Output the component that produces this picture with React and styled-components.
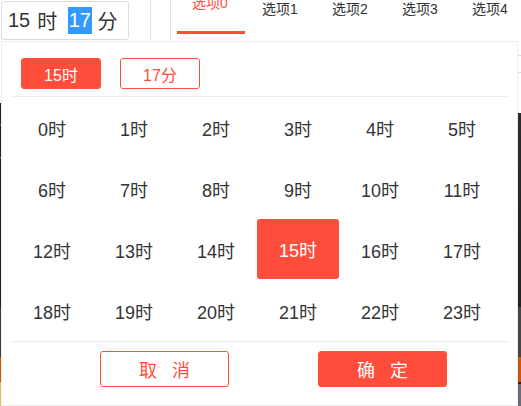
import React, { useState } from "react";
import styled, { createGlobalStyle } from "styled-components";

const RED = "#ff4d3c";

const GlobalStyle = createGlobalStyle`
  html, body {
    margin: 0;
    padding: 0;
    background: #fff;
  }
  body {
    font-family: "Liberation Sans", "Noto Sans CJK SC", sans-serif;
    color: #333;
  }
`;

const Page = styled.div`
  position: relative;
  width: 521px;
  height: 406px;
  overflow: hidden;
`;

const TopBar = styled.div`
  display: flex;
  align-items: flex-start;
  height: 41px;
`;

const TimeInput = styled.div`
  box-sizing: border-box;
  flex: none;
  margin: 1px 0 0 1px;
  width: 128px;
  height: 39px;
  border: 1px solid #dcdcdc;
  border-radius: 3px;
  display: flex;
  align-items: center;
  padding-left: 6px;
  font-size: 20px;
  color: #333;
`;

const Num = styled.span`
  line-height: 27px;
  padding: 0 ${(p) => (p.$selected ? "0.5px" : "0")};
  background: ${(p) => (p.$selected ? "#3399ff" : "transparent")};
  color: ${(p) => (p.$selected ? "#fff" : "#333")};
`;

const Unit = styled.span`
  margin: 0 ${(p) => p.$right}px 0 ${(p) => p.$left}px;
  font-family: "Noto Sans CJK SC", sans-serif;
  line-height: 27px;
`;

const Separator = styled.div`
  flex: none;
  width: 1px;
  height: 40px;
  background: #dbe2ea;
  margin-left: ${(p) => p.$gap}px;
`;

const Tabs = styled.div`
  display: flex;
  margin-left: 4px;
`;

const Tab = styled.div`
  position: relative;
  flex: none;
  width: 70px;
  height: 40px;
  font-size: 14px;
  line-height: 16px;
  text-align: center;
  color: ${(p) => (p.$active ? RED : "#333")};
  padding-top: ${(p) => (p.$active ? "0" : "1px")};
  box-sizing: border-box;

  span {
    display: inline-block;
    transform: translateY(${(p) => (p.$active ? "-5px" : "0")});
  }

  &::after {
    content: "";
    display: ${(p) => (p.$active ? "block" : "none")};
    position: absolute;
    left: 2px;
    right: 0;
    top: 31px;
    height: 3px;
    background: ${RED};
  }
`;

const Backdrop = styled.div`
  display: flex;
  justify-content: space-between;
  height: 365px;
`;

const EdgeStrip = styled.div`
  width: ${(p) => p.$w}px;
  height: 100%;
  background: ${(p) => p.$bg};
`;

const Popup = styled.div`
  position: absolute;
  top: 41px;
  left: 1px;
  width: 517px;
  height: 365px;
  box-sizing: border-box;
  border: 1px solid #eee;
  background: #fff;
`;

const PopupHead = styled.div`
  display: flex;
  gap: 19px;
  padding: 16px 0 0 19px;
  height: 31px;
  margin-bottom: 7px;
`;

const HeadButton = styled.button`
  box-sizing: border-box;
  width: 80px;
  height: 31px;
  border-radius: 3px;
  border: 1px solid ${RED};
  background: ${(p) => (p.$active ? RED : "#fff")};
  color: ${(p) => (p.$active ? "#fff" : RED)};
  font-family: "Liberation Sans", "Noto Sans CJK SC", sans-serif;
  font-size: 16px;
  padding: 0;
  cursor: pointer;
`;

const Divider = styled.div`
  height: 1px;
  background: #ececec;
  margin: 0 8px 0 9px;
`;

const HourGrid = styled.div`
  display: grid;
  grid-template-columns: repeat(6, 82px);
  grid-auto-rows: 61px;
  padding-left: 9px;
`;

const HourCell = styled.div`
  display: flex;
  align-items: center;
  justify-content: center;
  height: ${(p) => (p.$active ? "60px" : "61px")};
  border-radius: 3px;
  font-size: 18px;
  color: ${(p) => (p.$active ? "#fff" : "#333")};
  background: ${(p) => (p.$active ? RED : "transparent")};
  cursor: pointer;
`;

const Footer = styled.div`
  display: flex;
  gap: 89px;
  padding: 9px 0 0 98px;
`;

const FootButton = styled.button`
  box-sizing: border-box;
  width: 129px;
  height: 36px;
  border-radius: 3px;
  border: 1px solid ${RED};
  background: ${(p) => (p.$primary ? RED : "#fff")};
  color: ${(p) => (p.$primary ? "#fff" : RED)};
  font-family: "Liberation Sans", "Noto Sans CJK SC", sans-serif;
  font-size: 18px;
  letter-spacing: 5px;
  padding: 0 0 0 5px;
  cursor: pointer;
`;

const leftEdge = `linear-gradient(to bottom,
  #fff 0, #fff 62px,
  #222 62px, #222 83px, #5b9bd5 83px, #222 85px,
  #222 116px, #7fbf4d 116px, #222 118px,
  #222 266px, #3a3a3a 266px, #3a3a3a 316px,
  #d35400 316px, #d35400 341px,
  #e8c25a 341px, #e8c25a 365px)`;

const rightEdge = `linear-gradient(to bottom,
  #fff 0, #fff 14px, #ddd 14px, #ddd 15px, #fff 15px,
  #fff 31px, #ddd 31px, #ddd 32px, #fff 32px,
  #fff 72px, #2b2b2b 72px, #222 266px,
  #454545 266px, #454545 316px,
  #d35400 316px, #d35400 341px,
  #222 341px, #222 343px,
  #6b6b7b 343px, #6b6b7b 365px)`;

export default function App() {
  const [hour, setHour] = useState(15);
  const minute = 17;
  const hours = Array.from({ length: 24 }, (_, i) => i);
  const tabs = ["选项0", "选项1", "选项2", "选项3", "选项4"];

  return (
    <Page>
      <GlobalStyle />
      <TopBar>
        <TimeInput>
          <Num>15</Num>
          <Unit $left={7} $right={11}>时</Unit>
          <Num $selected>{minute}</Num>
          <Unit $left={6} $right={0}>分</Unit>
        </TimeInput>
        <Separator $gap={21} />
        <Separator $gap={19} />
        <Tabs>
          {tabs.map((t, i) => (
            <Tab key={t} $active={i === 0}>
              <span>{t}</span>
            </Tab>
          ))}
        </Tabs>
      </TopBar>

      <Backdrop>
        <EdgeStrip $w={1} $bg={leftEdge} />
        <EdgeStrip $w={3} $bg={rightEdge} />
      </Backdrop>

      <Popup>
        <PopupHead>
          <HeadButton $active>{hour}时</HeadButton>
          <HeadButton>{minute}分</HeadButton>
        </PopupHead>
        <Divider />
        <HourGrid>
          {hours.map((h) => (
            <HourCell key={h} $active={h === hour} onClick={() => setHour(h)}>
              {h}时
            </HourCell>
          ))}
        </HourGrid>
        <Divider />
        <Footer>
          <FootButton>取 消</FootButton>
          <FootButton $primary>确 定</FootButton>
        </Footer>
      </Popup>
    </Page>
  );
}
